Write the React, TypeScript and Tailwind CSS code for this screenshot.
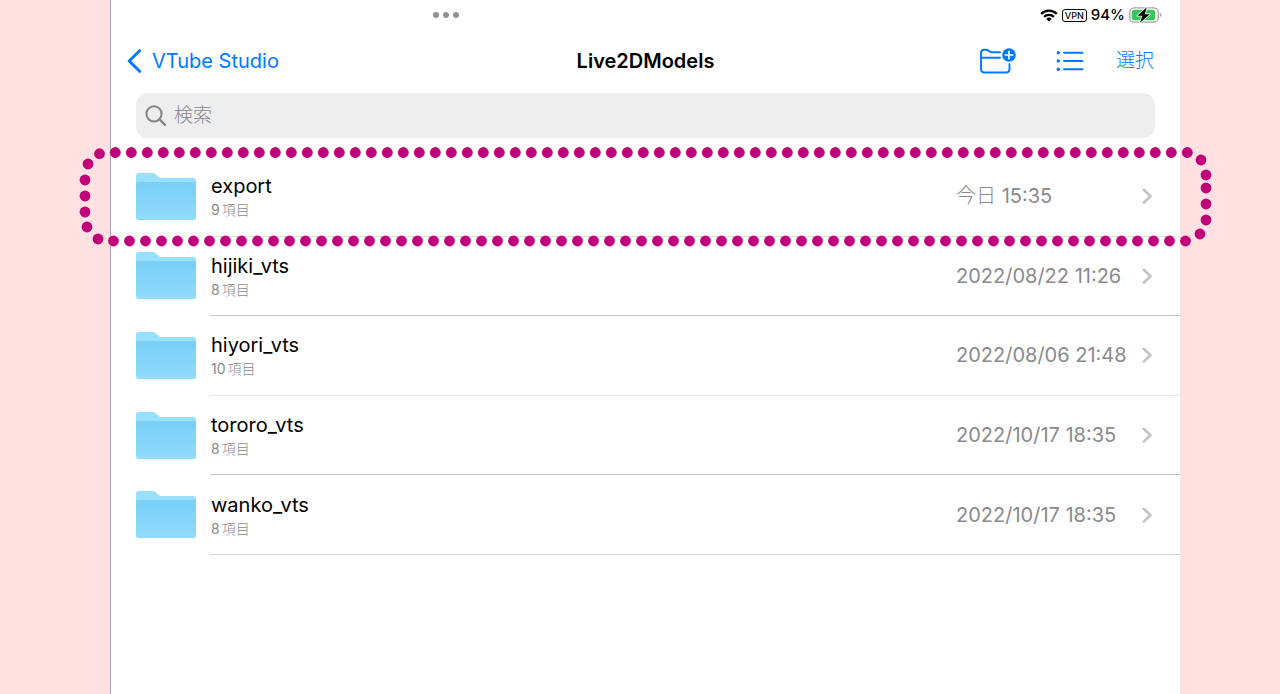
interface FolderItem {
	name: string;
	count: number;
	day: string;
	time: string;
}

const FOLDERS: FolderItem[] = [
	{ name: "export", count: 9, day: "今日", time: "15:35" },
	{ name: "hijiki_vts", count: 8, day: "2022/08/22", time: "11:26" },
	{ name: "hiyori_vts", count: 10, day: "2022/08/06", time: "21:48" },
	{ name: "tororo_vts", count: 8, day: "2022/10/17", time: "18:35" },
	{ name: "wanko_vts", count: 8, day: "2022/10/17", time: "18:35" },
];

// left and right ends of the dotted outline, clockwise
const END_DOTS = [
	[1123, 15],
	[1128, 30],
	[1128, 43],
	[1128, 59],
	[1128, 75],
	[1122, 89],
	[20, 94],
	[9, 82],
	[7, 67],
	[7, 51],
	[7, 35],
	[10, 19],
	[21.5, 8.7],
];

function WifiIcon() {
	return (
		<svg viewBox="0 0 18 13" className="h-[13px] w-[18px]" aria-hidden="true">
			<g fill="none" stroke="#000" strokeWidth="2.3">
				<path d="M1.2 4.9a11 11 0 0 1 15.6 0" />
				<path d="M4.1 7.9a7 7 0 0 1 9.8 0" />
			</g>
			<path d="M9 12.6 6.3 9.9a3.9 3.9 0 0 1 5.4 0z" />
		</svg>
	);
}

function BatteryIcon() {
	return (
		<svg viewBox="0 0 33 18" className="h-[18px] w-[33px]" aria-hidden="true">
			<rect x="0.8" y="1.8" width="28.4" height="14.4" rx="4.5" fill="#fff" stroke="#a3a3a3" strokeWidth="1.3" />
			<rect x="2.7" y="3.7" width="23.4" height="10.6" rx="2.8" fill="#34c759" />
			<path d="M30.8 6.8c2 .6 2 3.8 0 4.4z" fill="#a3a3a3" />
			<path
				d="M17.8 1.2 8.3 9.8h5l-2.3 7 9.9-8.6h-5.2z"
				fill="#000"
				stroke="#fff"
				strokeWidth="1.6"
				paintOrder="stroke"
				strokeLinejoin="round"
			/>
		</svg>
	);
}

function BackIcon() {
	return (
		<svg viewBox="0 0 16 24" className="h-6 w-4" fill="none" aria-hidden="true">
			<path d="M12.6 1.7 2.2 12l10.400 10.300" stroke="#007aff" strokeWidth="3" strokeLinecap="round" strokeLinejoin="round" />
		</svg>
	);
}

function NewFolderIcon() {
	return (
		<svg viewBox="0 0 38 28" className="h-7 w-[38px]" fill="none" aria-hidden="true">
			<g stroke="#007aff" strokeWidth="1.9" strokeLinecap="round" strokeLinejoin="round">
				<path d="M22 5.2H13.5c-1 0-1.6-.3-2.3-.9l-.9-.8c-.7-.6-1.2-.8-2.1-.8H6.2C4 2.7 3 3.8 3 5.9v16.4c0 2.2 1.1 3.2 3.3 3.2h22c2.2 0 3.2-1 3.2-3.2V17" />
				<path d="M3 10.7h19" />
			</g>
			<circle cx="31" cy="8" r="6.8" fill="#007aff" />
			<path d="M31 4.2v7.6M27.2 8h7.6" stroke="#fff" strokeWidth="1.6" strokeLinecap="round" />
		</svg>
	);
}

function ListIcon() {
	return (
		<svg viewBox="0 0 28 22" className="h-[22px] w-7" aria-hidden="true">
			<g fill="#007aff">
				<circle cx="2.3" cy="2.8" r="1.7" />
				<circle cx="2.3" cy="11" r="1.7" />
				<circle cx="2.3" cy="19.2" r="1.7" />
			</g>
			<path d="M8 2.8h18.5M8 11h18.5M8 19.2h18.5" stroke="#007aff" strokeWidth="1.9" strokeLinecap="round" />
		</svg>
	);
}

function SearchIcon() {
	return (
		<svg viewBox="0 0 22 22" className="h-[22px] w-[22px] shrink-0" fill="none" aria-hidden="true">
			<circle cx="9" cy="8.800" r="7.6" stroke="#86868a" strokeWidth="2" />
			<path d="m14.6 14.4 5.400 5.400" stroke="#86868a" strokeWidth="2.4" strokeLinecap="round" />
		</svg>
	);
}

function FolderIcon() {
	return (
		<svg viewBox="0 0 60 48" className="h-12 w-[60px] shrink-0" aria-hidden="true">
			<defs>
				<linearGradient id="folder-front" x1="0" y1="0" x2="0" y2="1">
					<stop offset="0" stopColor="#78cff7" />
					<stop offset="1" stopColor="#92dbfb" />
				</linearGradient>
			</defs>
			<path
				d="M0 2.7Q0 0 2.7 0h13.6c1.8 0 2.7.5 3.8 1.6l2 2c1 1 1.8 1.4 3.2 1.4h32Q60 5 60 7.5v12H0z"
				fill="#98e0fd"
			/>
			<path d="M0 11Q0 9 2 9h56q2 0 2 2v33.5q0 2.5-2.5 2.5h-55Q0 47 0 44.5z" fill="url(#folder-front)" />
		</svg>
	);
}

function ChevronIcon() {
	return (
		<svg viewBox="0 0 12 16" className="h-4 w-3" fill="none" aria-hidden="true">
			<path d="m2.8 1.8 6.7 6.4-6.7 6.4" stroke="#c3c3c6" strokeWidth="2.6" strokeLinecap="round" strokeLinejoin="round" />
		</svg>
	);
}

function DottedOutline() {
	return (
		<svg
			viewBox="0 0 1134 104"
			className="pointer-events-none absolute -left-[33px] -right-8 -top-3 z-10"
			fill="#c0007a"
			aria-hidden="true"
		>
			{Array.from({ length: 68 }, (_, i) => (
				<g key={i}>
					<circle cx={37.3 + i * 16} cy="7.5" r="5.4" />
					<circle cx={35.5 + i * 16} cy="96" r="5.4" />
				</g>
			))}
			{END_DOTS.map(([x, y]) => (
				<circle key={`${x}-${y}`} cx={x} cy={y} r="5.4" />
			))}
		</svg>
	);
}

function FolderRow({ item }: { item: FolderItem }) {
	return (
		<li className="group flex">
			<button type="button" className="flex min-w-0 flex-1 cursor-pointer items-stretch pl-[25px] text-left">
				<span className="flex items-center pr-[14px]">
					<FolderIcon />
				</span>
				<span className="flex min-w-0 flex-1 items-center border-b border-[#c6c6c8] pl-px pr-[27px] group-nth-[1]:border-[#e6e6e7] group-nth-[3]:border-[#e6e6e7] group-nth-[5]:border-[#d6d6d8]">
					<span className="flex min-w-0 flex-1 flex-col">
						<span className="truncate text-[20px] leading-7 text-black">{item.name}</span>
						<span className="flex gap-0.5 text-[14px] leading-5 text-[#8a8a8e]">
							{item.count}
							<span className="font-light">項目</span>
						</span>
					</span>
					<span className="w-[185px] shrink-0 text-[20px] leading-7 text-[#8a8a8e]">
						<span className={item.day === "今日" ? "font-light" : ""}>{item.day}</span> {item.time}
					</span>
					<ChevronIcon />
				</span>
			</button>
		</li>
	);
}

export default function App() {
	return (
		<div className="min-h-screen bg-[#ffe1e1] pl-[110px] pr-[100px] font-[Inter,'Noto_Sans_CJK_JP',sans-serif]">
			<main className="min-h-screen border-l border-[#a9a9ab] bg-white">
				<div className="flex h-[30px] items-center justify-between pl-[322px] pr-[18px]">
					<button type="button" aria-label="マルチタスク" className="flex cursor-pointer gap-1">
						<span className="h-1.5 w-1.5 rounded-full bg-[#929292]" />
						<span className="h-1.5 w-1.5 rounded-full bg-[#929292]" />
						<span className="h-1.5 w-1.5 rounded-full bg-[#929292]" />
					</button>
					<div className="flex items-center gap-1">
						<WifiIcon />
						<span className="flex h-[13px] items-center rounded-[3px] border border-black px-0.5 text-[9px] leading-none font-medium">
							VPN
						</span>
						<span className="text-[15px] leading-5 font-medium">94%</span>
						<BatteryIcon />
					</div>
				</div>
				<header className="grid h-[62px] grid-cols-[1fr_auto_1fr] items-center px-4">
					<a href="#" className="flex items-center gap-[9px] text-[20px] leading-7 text-[#007aff]">
						<BackIcon />
						VTube Studio
					</a>
					<h1 className="text-[20px] leading-7 font-semibold text-black">Live2DModels</h1>
					<div className="flex items-center justify-end pr-[10px] text-[#007aff]">
						<button type="button" aria-label="新規フォルダ" className="mr-10 cursor-pointer">
							<NewFolderIcon />
						</button>
						<button type="button" aria-label="表示オプション" className="mr-8 cursor-pointer">
							<ListIcon />
						</button>
						<button type="button" className="cursor-pointer text-[19px] leading-7 font-light">
							選択
						</button>
					</div>
				</header>
				<label className="mx-[25px] mt-px flex h-[45px] items-center gap-[7px] rounded-xl bg-[#eeeeee] px-[9px]">
					<SearchIcon />
					<input
						type="search"
						aria-label="検索"
						placeholder="検索"
						className="min-w-0 flex-1 bg-transparent text-[19px] leading-7 font-light text-black outline-none placeholder:text-[#86868a]"
					/>
				</label>
				<div className="relative mt-[19px]">
					<DottedOutline />
					<ul className="grid min-h-[398px] auto-rows-fr">
						{FOLDERS.map((item) => (
							<FolderRow key={item.name} item={item} />
						))}
					</ul>
				</div>
			</main>
		</div>
	);
}
